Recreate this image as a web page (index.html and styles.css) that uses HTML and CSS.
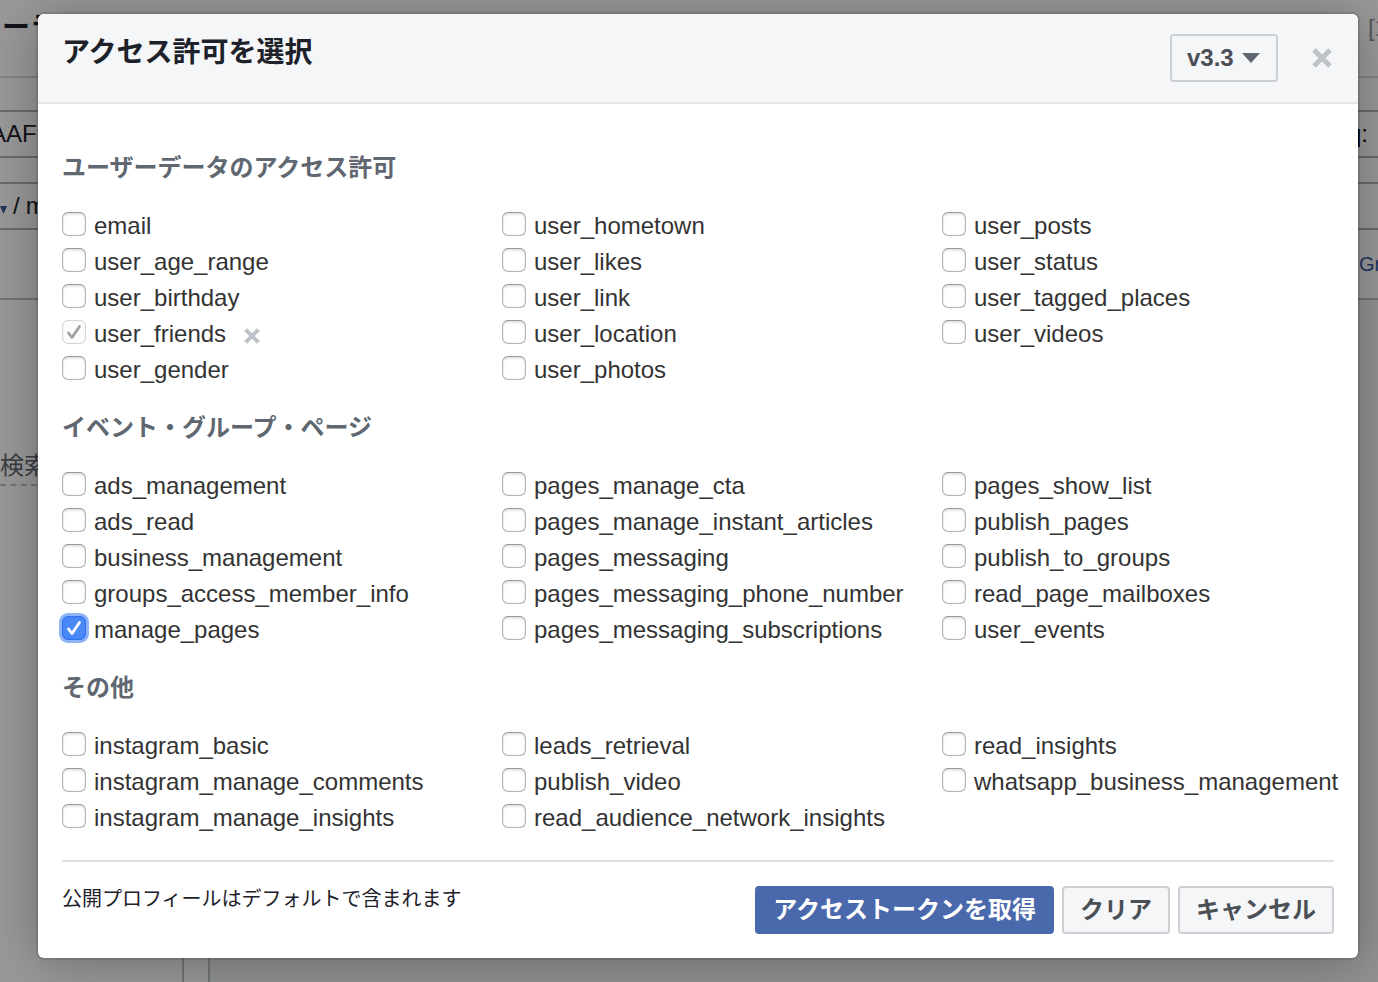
FILE: index.html
```html
<!DOCTYPE html>
<html lang="ja">
<head>
<meta charset="utf-8">
<meta name="viewport" content="width=device-width, initial-scale=1">
<title>アクセス許可を選択</title>
<link rel="stylesheet" href="styles.css">
</head>
<body>
<svg class="defs" aria-hidden="true">
  <symbol id="cross" viewBox="0 0 20 20"><path d="M2 2 18 18M18 2 2 18" fill="none" stroke="currentColor" stroke-width="5"/></symbol>
  <symbol id="tick" viewBox="0 0 24 24"><path d="M6.500 13 10 17.500 17.500 6.500" fill="none" stroke="currentColor" stroke-width="2.800" stroke-linecap="round" stroke-linejoin="round"/></symbol>
</svg>

<div class="page" inert>
  <div class="page-header"><span class="page-title">ーラ</span><span class="page-note">[1</span></div>
  <div class="page-form">
    <div class="field"><input class="token" type="text" value="AAF" aria-label="アクセストークン"><span class="token-end">q:</span></div>
    <div class="field"><svg class="field-arrow" viewBox="0 0 8 8"><path d="M0 0h7L3.500 8z" fill="currentColor"/></svg><span class="slash">/</span><span>me</span></div>
    <p class="form-link"><a href="#">Gr</a></p>
  </div>
  <div class="page-main">
    <div class="sidebar"><span class="search">検索</span></div>
    <div class="result"></div>
  </div>
</div>

<div class="overlay">
  <section class="dialog" role="dialog" aria-modal="true" aria-labelledby="dialog-title">
    <header class="dialog-header">
      <h1 class="dialog-title" id="dialog-title">アクセス許可を選択</h1>
      <div class="version">
        <select class="version-select" aria-label="バージョン"><option>v3.3</option></select>
        <svg class="version-arrow" viewBox="0 0 18 10"><path d="M0 0h18L9 10z" fill="currentColor"/></svg>
      </div>
      <button class="close" type="button" aria-label="閉じる"><svg class="close-icon"><use href="#cross"/></svg></button>
    </header>

    <form class="dialog-body">
      <h2 class="group-title">ユーザーデータのアクセス許可</h2>
      <div class="group">
        <ul class="column">
          <li class="row"><label class="option"><input class="box" type="checkbox">email</label></li>
          <li class="row"><label class="option"><input class="box" type="checkbox">user_age_range</label></li>
          <li class="row"><label class="option"><input class="box" type="checkbox">user_birthday</label></li>
          <li class="row"><label class="option"><span class="ticked"><input class="box" type="checkbox" checked disabled><svg class="tick tick-off"><use href="#tick"/></svg></span>user_friends</label><button class="remove" type="button" aria-label="user_friendsを削除"><svg class="remove-icon"><use href="#cross"/></svg></button></li>
          <li class="row"><label class="option"><input class="box" type="checkbox">user_gender</label></li>
        </ul>
        <ul class="column">
          <li class="row"><label class="option"><input class="box" type="checkbox">user_hometown</label></li>
          <li class="row"><label class="option"><input class="box" type="checkbox">user_likes</label></li>
          <li class="row"><label class="option"><input class="box" type="checkbox">user_link</label></li>
          <li class="row"><label class="option"><input class="box" type="checkbox">user_location</label></li>
          <li class="row"><label class="option"><input class="box" type="checkbox">user_photos</label></li>
        </ul>
        <ul class="column">
          <li class="row"><label class="option"><input class="box" type="checkbox">user_posts</label></li>
          <li class="row"><label class="option"><input class="box" type="checkbox">user_status</label></li>
          <li class="row"><label class="option"><input class="box" type="checkbox">user_tagged_places</label></li>
          <li class="row"><label class="option"><input class="box" type="checkbox">user_videos</label></li>
        </ul>
      </div>

      <h2 class="group-title">イベント・グループ・ページ</h2>
      <div class="group">
        <ul class="column">
          <li class="row"><label class="option"><input class="box" type="checkbox">ads_management</label></li>
          <li class="row"><label class="option"><input class="box" type="checkbox">ads_read</label></li>
          <li class="row"><label class="option"><input class="box" type="checkbox">business_management</label></li>
          <li class="row"><label class="option"><input class="box" type="checkbox">groups_access_member_info</label></li>
          <li class="row"><label class="option"><span class="ticked"><input class="box box-active" type="checkbox" checked><svg class="tick"><use href="#tick"/></svg></span>manage_pages</label></li>
        </ul>
        <ul class="column">
          <li class="row"><label class="option"><input class="box" type="checkbox">pages_manage_cta</label></li>
          <li class="row"><label class="option"><input class="box" type="checkbox">pages_manage_instant_articles</label></li>
          <li class="row"><label class="option"><input class="box" type="checkbox">pages_messaging</label></li>
          <li class="row"><label class="option"><input class="box" type="checkbox">pages_messaging_phone_number</label></li>
          <li class="row"><label class="option"><input class="box" type="checkbox">pages_messaging_subscriptions</label></li>
        </ul>
        <ul class="column">
          <li class="row"><label class="option"><input class="box" type="checkbox">pages_show_list</label></li>
          <li class="row"><label class="option"><input class="box" type="checkbox">publish_pages</label></li>
          <li class="row"><label class="option"><input class="box" type="checkbox">publish_to_groups</label></li>
          <li class="row"><label class="option"><input class="box" type="checkbox">read_page_mailboxes</label></li>
          <li class="row"><label class="option"><input class="box" type="checkbox">user_events</label></li>
        </ul>
      </div>

      <h2 class="group-title">その他</h2>
      <div class="group">
        <ul class="column">
          <li class="row"><label class="option"><input class="box" type="checkbox">instagram_basic</label></li>
          <li class="row"><label class="option"><input class="box" type="checkbox">instagram_manage_comments</label></li>
          <li class="row"><label class="option"><input class="box" type="checkbox">instagram_manage_insights</label></li>
        </ul>
        <ul class="column">
          <li class="row"><label class="option"><input class="box" type="checkbox">leads_retrieval</label></li>
          <li class="row"><label class="option"><input class="box" type="checkbox">publish_video</label></li>
          <li class="row"><label class="option"><input class="box" type="checkbox">read_audience_network_insights</label></li>
        </ul>
        <ul class="column">
          <li class="row"><label class="option"><input class="box" type="checkbox">read_insights</label></li>
          <li class="row"><label class="option"><input class="box" type="checkbox">whatsapp_business_management</label></li>
        </ul>
      </div>

      <footer class="dialog-footer">
        <p class="footer-note">公開プロフィールはデフォルトで含まれます</p>
        <button class="button button-primary" type="button">アクセストークンを取得</button>
        <button class="button" type="button">クリア</button>
        <button class="button" type="button">キャンセル</button>
      </footer>
    </form>
  </section>
</div>
</body>
</html>
```

FILE: styles.css
```css
* { box-sizing: border-box; }

body {
  margin: 0;
  position: relative;
  min-height: 100vh;
  overflow-x: hidden;
  background: #fff;
  color: #333;
  font: 24px/36px "Liberation Sans", "Noto Sans CJK JP", sans-serif;
}

button, input, select { font: inherit; color: inherit; margin: 0; }
h1, h2, p, ul { margin: 0; padding: 0; }
ul { list-style: none; }
.defs { position: absolute; width: 0; height: 0; }

/* Page under the dialog */
.page {
  position: absolute;
  inset: 0;
  display: flex;
  flex-direction: column;
  overflow: hidden;
  color: #1d2129;
}
.page-header {
  display: flex;
  justify-content: space-between;
  height: 78px;
  padding: 10px 0 0 2px;
  border-bottom: 2px solid #dadde1;
}
.page-title { font-size: 28px; font-weight: bold; }
.page-note { width: 10px; color: #90949c; }
.page-form {
  display: flex;
  flex-direction: column;
  gap: 24px;
  padding-top: 32px;
  border-bottom: 2px solid #bec3c9;
}
.field {
  display: flex;
  align-items: center;
  height: 48px;
  border: solid #b0b3ba;
  border-width: 2px 0;
}
.token { flex: 1; padding: 0; border: 0; background: none; text-indent: -10px; }
.token-end { width: 30px; color: #000; }
.field-arrow { width: 8px; height: 8px; margin-top: 8px; color: #365899; }
.slash { padding: 0 6px 0 5px; }
.form-link { display: flex; justify-content: flex-end; height: 44px; font-size: 20px; line-height: 20px; }
.form-link a { width: 19px; color: #365899; text-decoration: none; }
.page-main { display: flex; flex: 1; gap: 24px; }
.sidebar { width: 184px; padding-top: 148px; border-right: 2px solid #bec3c9; }
.search { display: block; width: 120px; border-bottom: 2px dashed #bec3c9; color: #606770; }
.result { flex: 1; border-left: 2px solid #bec3c9; background: #f2f5f3; }

/* Dialog */
.overlay {
  position: relative;
  min-height: 100vh;
  padding: 14px 20px 24px 38px;
  background: rgba(0, 0, 0, .4);
}
.dialog {
  border-radius: 6px;
  background: #fff;
  box-shadow: 0 4px 52px rgba(0, 0, 0, .3), 0 0 0 2px rgba(0, 0, 0, .1);
}
.dialog-header {
  display: flex;
  align-items: flex-start;
  padding: 20px 24px;
  border-bottom: 2px solid #e5e5e5;
  border-radius: 6px 6px 0 0;
  background: #f5f6f7;
}
.dialog-title { flex: 1; color: #1d2129; font-size: 28px; line-height: 38px; }
.version { display: grid; align-items: center; }
.version-select {
  grid-area: 1 / 1;
  width: 108px;
  height: 48px;
  padding: 0 15px;
  border: 2px solid #ccd0d5;
  border-radius: 4px;
  background: none;
  color: #4b4f56;
  font-weight: bold;
  appearance: none;
}
.version-arrow {
  grid-area: 1 / 1;
  justify-self: end;
  width: 18px;
  height: 10px;
  margin-right: 18px;
  color: #606770;
  pointer-events: none;
}
.close, .remove { display: flex; padding: 0; border: 0; background: none; color: #bec3c9; }
.close { align-items: center; height: 48px; margin: 0 2px 0 34px; }
.close-icon { width: 20px; height: 20px; }

.dialog-body { padding: 24px; }
.group-title { padding: 20px 0; color: #606770; font-size: 24px; line-height: 40px; }
.group { display: grid; grid-template-columns: repeat(3, 1fr); margin-right: -48px; }
.row { display: flex; align-items: center; }
.option { display: flex; gap: 8px; white-space: nowrap; }
.box {
  width: 24px;
  height: 24px;
  margin-top: 4px;
  border: 1px solid #b4b4b4;
  border-top-color: #999;
  border-radius: 6px;
  background: #fff;
  box-shadow: inset 0 0 1px #aaa, inset 0 2px 2px #e8e8e8;
  appearance: none;
}
.box:disabled { border-color: #d4d4d4; background: #fcfcfc; box-shadow: inset 0 0 1px #ddd; }
.box-active {
  border-color: #2f71ee;
  background: #4a88f6;
  box-shadow: inset 0 0 1px #2f71ee, 0 0 0 3px #8fb3f7;
}
.ticked { display: grid; height: 28px; }
.ticked .box, .tick { grid-area: 1 / 1; }
.tick { z-index: 1; width: 24px; height: 24px; margin-top: 4px; color: #fff; pointer-events: none; }
.tick-off { color: #a0a0a0; }
.remove { margin: 4px 0 0 18px; }
.remove-icon { width: 16px; height: 16px; }

.dialog-footer {
  display: flex;
  align-items: flex-start;
  gap: 8px;
  margin-top: 24px;
  padding-top: 24px;
  border-top: 2px solid #dddfe2;
}
.footer-note { flex: 1; font-size: 20px; line-height: 26px; color: #1d2129; }
.button {
  height: 48px;
  padding: 0 16px;
  border: 2px solid #ccd0d5;
  border-radius: 4px;
  background: #f5f6f7;
  color: #4b4f56;
  font-weight: bold;
  line-height: 40px;
}
.button-primary { border-color: #4a69ad; background: #4a69ad; color: #fff; }
```
